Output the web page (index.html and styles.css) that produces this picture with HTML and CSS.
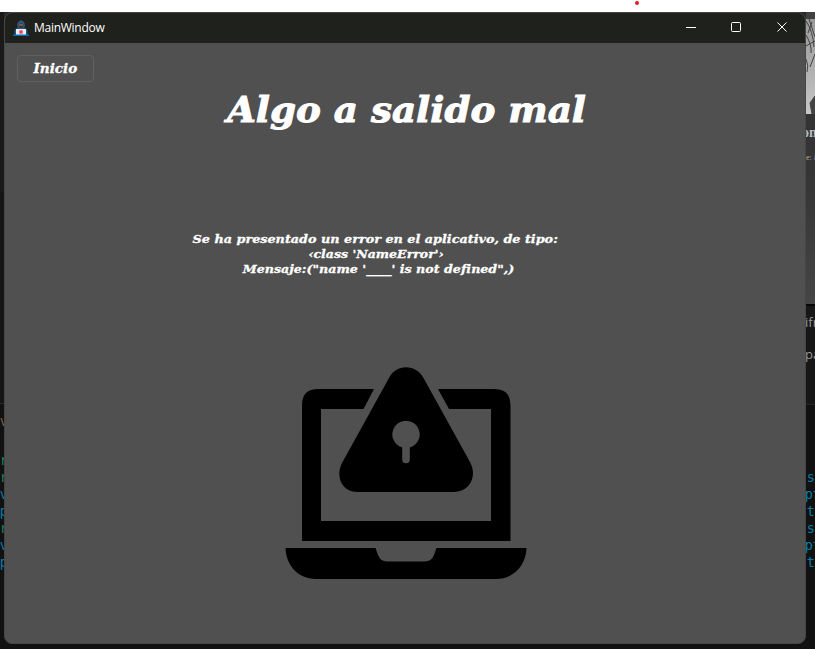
FILE: index.html
```html
<!DOCTYPE html>
<html lang="es">
<head>
<meta charset="utf-8">
<title>MainWindow</title>
<link rel="stylesheet" href="styles.css">
</head>
<body>
<div class="top"><i class="dot"></i></div>
<div class="desktop">
  <div class="strip left">
    <div class="upper"></div>
    <div class="panel"></div>
    <div class="terminal">
      <span class="orange tab">v</span>
      <span class="green">r</span><span class="green">r</span><span class="blue">v</span><span class="blue">gp</span><span class="green">r</span><span class="blue">v</span><span class="blue">gp</span>
    </div>
  </div>
  <main class="window">
    <header class="titlebar">
      <svg class="app-icon" width="16" height="16" viewBox="0 0 16 16">
        <path d="M1.500 15V11Q2 8.500 4.500 8L4 4Q5 1 8 0Q11 1 12 4L11.500 8Q14 8.500 14.500 11V15Z" fill="#2c547e"/>
        <path d="M5.500 4.500Q8 2.500 10.500 4.500L10 7L8 8L6 7Z" fill="#39302d"/>
        <path d="M6 4.500h4v1H6z" fill="#b28562"/>
        <path d="M3 9h10V15H3z" fill="#e9eef5"/>
        <circle cx="8" cy="12" r="2" fill="#f0525a"/>
        <path d="M0 14.500h16V16H0z" fill="#0869b5"/>
      </svg>
      <span class="caption">MainWindow</span>
      <svg class="controls" width="106" height="12" viewBox="0 0 106 12" fill="none" stroke="#fff">
        <path d="M0 6.500H10"/>
        <rect x="45.500" y="1.500" width="9" height="9" rx="1"/>
        <path d="M91.500 1.500L100.500 10.500M100.500 1.500L91.500 10.500"/>
      </svg>
    </header>
    <button class="home"><span>Inicio</span></button>
    <h1><span>Algo a salido mal</span></h1>
    <div class="message">
      <p class="m1"><span>Se ha presentado un error en el aplicativo, de tipo:</span></p>
      <p class="m2"><span>‹class 'NameError'›</span></p>
      <p class="m3"><span>Mensaje:("name '____' is not defined",)</span></p>
    </div>
    <svg class="laptop" width="242" height="214" viewBox="285 366 242 214">
      <path fill-rule="evenodd" d="M302 541V405Q302 389 318 389H374L363.500 409H321V521H491V409H449L438 389H494Q510.500 389 510.500 405V541Z"/>
      <path fill-rule="evenodd" d="M389 378C396 363.500 416 363.500 423.500 378L470 462C478 477 469 492 454 492H358C342 492 335 477 342 463ZM402.200 447.500V459.500A3.800 3.800 0 0 0 409.800 459.500V447.500A13.700 13.700 0 1 0 402.200 447.500Z"/>
      <path d="M285.500 548H375.500L378 555Q380.500 561.500 387 561.500H425Q431.500 561.500 434 555L436.500 548H526.500C526 565 514 579 496 579H316C298 579 286 565 285.500 548Z"/>
    </svg>
  </main>
  <div class="strip right">
    <div class="photo"><svg width="9" height="95" viewBox="0 0 9 95" fill="none" stroke="#444"><path d="M0 2Q7 12 8 28M3 0L9 18M0 16Q6 26 5 34M0 27L9 22M0 40Q3 46 1 53M6 3L2 14M9 35L4 48" /><path d="M9 77L4 84L6 95H9Z" fill="#444"/></svg></div>
    <div class="doc"><b>on</b><small>e: <em>b</em></small></div>
    <div class="notes"><span>ifr</span><span>pa</span></div>
    <div class="terminal">
      <span class="blue">'s</span><span class="blue">.pt</span><span class="blue">st</span><span class="blue">'s</span><span class="blue">.pt</span><span class="blue">st</span>
    </div>
  </div>
</div>
</body>
</html>
```

FILE: styles.css
```css
* { box-sizing: border-box; }
body { margin: 0; width: 815px; height: 649px; overflow: hidden; background: #111; }
.top { height: 12px; background: #fff; padding: 1px 0 0 635px; }
.dot { display: block; width: 4px; height: 4px; border-radius: 50%; background: #e01b24; }
.desktop { display: grid; grid-template-columns: 4px 802px 9px; height: 637px; background: linear-gradient(#282828 0 40px, #111 40px); }
.strip { overflow: hidden; height: 637px; background: #111; }
.left .upper { height: 180px; background: #191919; }
.left .panel { height: 212px; background: #151515; border-bottom: 1px solid #2b2b2b; }
.terminal { font: 13.5px/17px "DejaVu Sans Mono", monospace; display: flex; flex-direction: column; }
.terminal span { height: 17px; white-space: pre; }
.left .terminal { align-items: flex-end; padding-top: 9px; }
.left .terminal .tab { height: 39px; }
.left .terminal span { margin-right: -4px; }
.right .terminal { background: #111; padding-top: 64px; height: 245px; align-items: flex-end; border-top: 1px solid #2b2522; }
.right .terminal span { margin-right: 0; }
.right .terminal span:nth-child(3n + 2) { margin-right: -6px; }
.green { color: #17875a; }
.blue { color: #087ca5; }
.orange { color: #875e43; }
.window { height: 632px; background: #505050; border: 1px solid #464646; border-radius: 8px; overflow: hidden; display: flex; flex-direction: column; align-items: flex-start; }
.titlebar { width: 100%; height: 30px; flex: none; background: #1f211c; display: flex; align-items: center; padding: 0 17px 0 8px; }
.app-icon { display: block; }
.caption { font: 12px/16px "Open Sans", "Noto Sans", sans-serif; color: #fff; margin-left: 5px; letter-spacing: -0.27px; }
.controls { margin-left: auto; margin-right: -4px; margin-bottom: 2px; }
.home, h1, .message { font-family: "DejaVu Serif", serif; font-weight: bold; font-style: italic; color: #fff; }
.home { width: 77px; height: 27px; margin: 12px 0 0 12px; padding: 2px 0 0; border: 1px solid #606060; border-radius: 4px; background: #505050; font-size: 12px; line-height: 23px; text-align: center; }
h1 { margin: 3px 0 0; width: 803px; height: 48px; font-size: 36px; line-height: 48px; text-align: center; }
h1 span, .home span, .message span { display: inline-block; white-space: pre; }
h1 span { transform: scaleX(1.035); -webkit-text-stroke: 1px #fff; }
.home span { transform: scaleX(1.13); -webkit-text-stroke: 0.3px #fff; }
.message span { -webkit-text-stroke: 0.3px #fff; }
.m1 span { transform: scaleX(1.112); }
.m2 span { transform: translateX(1px) scaleX(1.09); }
.m3 span { transform: translateX(3px) scaleX(1.1); }
.message { margin-top: 99px; width: 740px; font-size: 11.5px; line-height: 15px; text-align: center; }
.message p { margin: 0; height: 15px; }
.laptop { margin: 89px 0 0 280px; flex: none; }
.right .photo { height: 102px; padding-top: 7px; background: #414141; }
.photo svg { display: block; background: linear-gradient(#999, #aaa 40%, #c7c7c7); }
.right .doc { height: 190px; background: linear-gradient(#333, #363636 40%, #454545); overflow: hidden; font-family: "Liberation Serif", serif; color: #bbb; }
.doc b { display: block; margin: 10px 0 0 -4px; font-size: 14px; line-height: 18px; white-space: nowrap; }
.doc small { display: block; margin-top: 10px; font-size: 8px; line-height: 12px; white-space: nowrap; color: #b5ad85; }
.doc em { color: #526fc0; }
.right .notes { height: 100px; background: #171717; border-top: 2px solid #080808; color: #999; font: 13px/32px "Open Sans", sans-serif; }
.notes span { display: block; margin-left: -1px; }
```
